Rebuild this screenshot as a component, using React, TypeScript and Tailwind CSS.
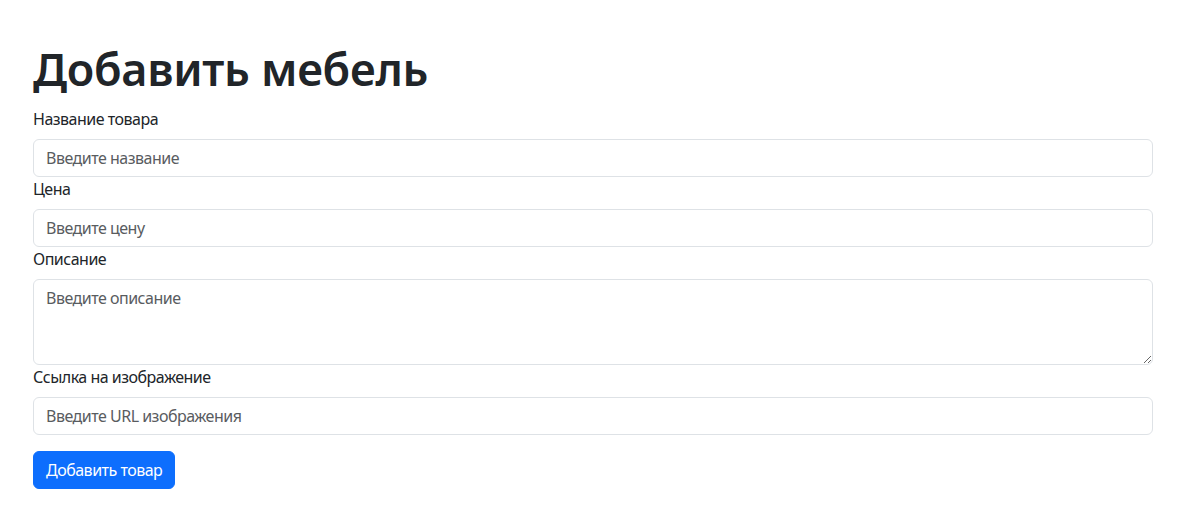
import { useState } from 'react';

export default function App() {
    const [name, setName] = useState('');
    const [price, setPrice] = useState('');
    const [description, setDescription] = useState('');
    const [image, setImage] = useState('');

    const inputClass =
        'block w-full h-[38px] px-3 py-1.5 text-base leading-6 tracking-[-0.5px] text-[#212529] bg-white border border-[#dee2e6] rounded-md outline-none placeholder:text-[#595c5f]';
    const labelClass = 'block text-base leading-6 tracking-[-0.5px] mb-2';

    return (
        <div className="min-h-screen bg-white text-[#212529] font-['Noto_Sans',sans-serif]">
            <div className="ml-[33px] w-[1120px] pt-[39px]">
                <h1 className="text-[45px] leading-[60px] font-semibold tracking-[-0.3px] mb-2">Добавить мебель</h1>
                <form onSubmit={(e) => e.preventDefault()}>
                    <label className={labelClass}>Название товара</label>
                    <input
                        className={inputClass}
                        placeholder="Введите название"
                        value={name}
                        onChange={(e) => setName(e.target.value)}
                    />
                    <label className={labelClass}>Цена</label>
                    <input
                        className={inputClass}
                        placeholder="Введите цену"
                        value={price}
                        onChange={(e) => setPrice(e.target.value)}
                    />
                    <label className={labelClass}>Описание</label>
                    <textarea
                        rows={3}
                        className="block w-full h-[86px] px-3 py-1.5 text-base leading-6 tracking-[-0.5px] text-[#212529] bg-white border border-[#dee2e6] rounded-md outline-none placeholder:text-[#595c5f]"
                        placeholder="Введите описание"
                        value={description}
                        onChange={(e) => setDescription(e.target.value)}
                    />
                    <label className={labelClass}>Ссылка на изображение</label>
                    <input
                        className={inputClass}
                        placeholder="Введите URL изображения"
                        value={image}
                        onChange={(e) => setImage(e.target.value)}
                    />
                    <button
                        type="submit"
                        className="mt-4 h-[38px] px-3 text-base leading-6 tracking-[-0.5px] text-white bg-[#0d6efd] border border-[#0d6efd] rounded-md"
                    >
                        Добавить товар
                    </button>
                </form>
            </div>
        </div>
    );
}
